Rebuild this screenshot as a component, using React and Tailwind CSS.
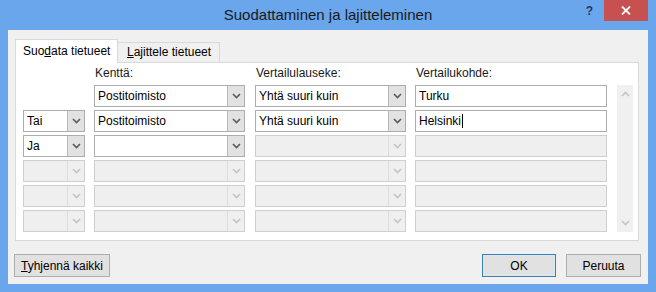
import React from 'react';

const Chevron = ({ disabled }) => (
    <svg width="9" height="6" viewBox="0 0 9 6">
        <path
            d="M1 1 L4.5 4.5 L8 1"
            fill="none"
            stroke={disabled ? '#c4c4c4' : '#5a5a5a'}
            strokeWidth="1.6"
        />
    </svg>
);

const Combo = ({ width, value, disabled }) => (
    <div
        className={`flex h-[22px] border ${width} ${
            disabled ? 'border-[#cfcfcf] bg-[#efefef]' : 'border-[#acacac] bg-white'
        }`}
    >
        <span className="flex-1 pl-[3px] leading-[20px] text-black truncate">{value}</span>
        <span
            className={`flex w-[17px] items-center justify-center border-l ${
                disabled ? 'border-[#dcdcdc] bg-[#efefef]' : 'border-[#b8b8b8] bg-[#e2e2e2]'
            }`}
        >
            <Chevron disabled={disabled} />
        </span>
    </div>
);

const TextBox = ({ value, caret, disabled }) => (
    <div
        className={`flex h-[22px] w-[192px] items-center border pl-[3px] ${
            disabled ? 'border-[#cfcfcf] bg-[#efefef]' : 'border-[#acacac] bg-white'
        }`}
    >
        <span className="leading-[20px]">{value}</span>
        {caret && <span className="ml-px h-[14px] w-px bg-black" />}
    </div>
);

const rows = [
    { op: null, field: 'Postitoimisto', cmp: 'Yhtä suuri kuin', value: 'Turku' },
    { op: 'Tai', field: 'Postitoimisto', cmp: 'Yhtä suuri kuin', value: 'Helsinki', caret: true },
    { op: 'Ja', field: '', cmp: '', value: '', partial: true },
    { disabled: true },
    { disabled: true },
    { disabled: true },
];

const Button = ({ children, primary, className = '' }) => (
    <button
        className={`h-[23px] border bg-[#e1e1e1] text-black ${
            primary ? 'border-[#3c7fb1] shadow-[inset_0_0_0_1px_#d8e8f6]' : 'border-[#adadad]'
        } ${className}`}
    >
        {children}
    </button>
);

export default function App() {
    return (
        <div
            className="flex h-[292px] w-[656px] flex-col bg-[#6aa6ec] text-[12px] text-black"
            style={{ fontFamily: '"Liberation Sans", Arial, sans-serif' }}
        >
            {/* Title bar */}
            <div className="grid h-[30px] grid-cols-[1fr_auto_1fr] items-start">
                <div />
                <div className="pt-[5px] text-[15px] leading-[20px] text-[#1a1a1a]">
                    Suodattaminen ja lajitteleminen
                </div>
                <div className="flex items-start justify-end pr-[8px]">
                    <span className="mr-[11px] mt-[4px] text-[12px] font-bold leading-[14px] text-[#1e3a5f]">?</span>
                    <span className="flex h-[21px] w-[44px] items-center justify-center bg-[#c75050]">
                        <svg width="10" height="9" viewBox="0 0 10 9">
                            <path d="M1 0.5 L9 8.5 M9 0.5 L1 8.5" stroke="white" strokeWidth="1.8" />
                        </svg>
                    </span>
                </div>
            </div>

            {/* Client area */}
            <div className="mx-[8px] flex h-[254px] flex-col bg-[#f0f0f0]">
                {/* Tabs */}
                <div className="ml-[7px] mt-[9px] flex items-end">
                    <div className="relative z-10 -mb-px h-[24px] w-[103px] border border-b-0 border-[#d9d9d9] bg-white pl-[7px] leading-[22px]">
                        Suo<span className="underline">d</span>ata tietueet
                    </div>
                    <div className="h-[20px] w-[102px] border border-l-0 border-b-0 border-[#d9d9d9] bg-[#f0f0f0] pl-[9px] leading-[19px]">
                        <span className="underline">L</span>ajittele tietueet
                    </div>
                </div>

                {/* Panel */}
                <div className="ml-[7px] mr-[9px] flex h-[179px] border border-[#d9d9d9] bg-white pl-[7px] pr-[5px]">
                    <div className="flex flex-col gap-[3px] pb-[8px]">
                        <div className="flex h-[22px] items-center gap-[9px] text-[#1a1a1a]">
                            <div className="w-[62px]" />
                            <div className="w-[151px] pl-px">Kenttä:</div>
                            <div className="ml-px w-[151px] pl-px">Vertailulauseke:</div>
                            <div className="w-[192px] pl-px">Vertailukohde:</div>
                        </div>
                        {rows.map((r, i) => (
                            <div key={i} className="flex items-center gap-[9px]">
                                {r.op === null ? (
                                    <div className="h-[22px] w-[62px]" />
                                ) : (
                                    <Combo width="w-[62px]" value={r.op} disabled={r.disabled} />
                                )}
                                <Combo width="w-[151px]" value={r.field} disabled={r.disabled} />
                                <Combo
                                    width="w-[151px] ml-px"
                                    value={r.cmp}
                                    disabled={r.disabled || r.partial}
                                />
                                <TextBox
                                    value={r.value}
                                    caret={r.caret}
                                    disabled={r.disabled || r.partial}
                                />
                            </div>
                        ))}
                    </div>

                    {/* Scrollbar */}
                    <div className="ml-[10px] mt-[22px] mb-[8px] flex w-[17px] flex-col items-center justify-between bg-[#f0f0f0] py-[6px]">
                        <svg width="9" height="6" viewBox="0 0 9 6">
                            <path d="M1 5 L4.5 1.5 L8 5" fill="none" stroke="#c4c4c4" strokeWidth="1.6" />
                        </svg>
                        <Chevron disabled />
                    </div>
                </div>

                {/* Buttons */}
                <div className="ml-[6px] mr-[7px] mt-[13px] flex">
                    <Button className="w-[96px]">
                        <span className="underline">T</span>yhjennä kaikki
                    </Button>
                    <div className="flex-1" />
                    <Button primary className="w-[74px]">OK</Button>
                    <Button className="ml-[10px] w-[75px]">Peruuta</Button>
                </div>
            </div>
        </div>
    );
}
